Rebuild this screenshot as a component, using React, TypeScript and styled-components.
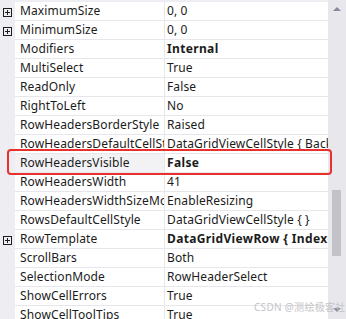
import React from "react";
import styled, { createGlobalStyle } from "styled-components";

const Global = createGlobalStyle`
  html, body { margin: 0; padding: 0; background: #ffffff; }
  body { font-family: "Noto Sans", "Noto Sans CJK SC", sans-serif; }
`;

const Frame = styled.div`
  position: relative;
  width: 346px;
  height: 319px;
  overflow: hidden;
  display: flex;
  background: #eeeef2;
`;

const Grid = styled.div`
  flex: 1;
  padding-top: 2px;
  display: flex;
  flex-direction: column;
`;

const Row = styled.div`
  position: relative;
  display: grid;
  grid-template-columns: 15px 150px 1fr;
  height: 19px;
  flex: none;
`;

const Gutter = styled.div`
  display: flex;
  align-items: center;
  justify-content: center;
  padding-top: 1px;
`;

const Cell = styled.div<{ $bold?: boolean; $selected?: boolean; $name?: boolean }>`
  background: ${(p) => (p.$selected ? "#f2f2f5" : "#ffffff")};
  border-bottom: 1px solid #e6e6ec;
  border-right: ${(p) => (p.$name ? "1px solid #e6e6ec" : "none")};
  padding-left: ${(p) => (p.$name ? "5px" : "2px")};
  font-size: 12px;
  letter-spacing: ${(p) => (p.$bold ? "0.35px" : "0.12px")};
  line-height: 18px;
  color: #1b1b1b;
  font-weight: ${(p) => (p.$bold ? 700 : 400)};
  white-space: nowrap;
  overflow: hidden;
`;

const Expander = styled.div`
  width: 9px;
  height: 9px;
  box-sizing: border-box;
  border: 1px solid #1e1e1e;
  position: relative;
  &::before {
    content: "";
    position: absolute;
    left: 1px;
    top: 3px;
    width: 5px;
    height: 1px;
    background: #1e1e1e;
  }
  &::after {
    content: "";
    position: absolute;
    left: 3px;
    top: 1px;
    width: 1px;
    height: 5px;
    background: #1e1e1e;
  }
`;

const Highlight = styled.div`
  position: absolute;
  z-index: 5;
  left: 7px;
  top: -5px;
  width: 325px;
  height: 26px;
  box-sizing: border-box;
  border: 2.5px solid #e8302c;
  border-radius: 4px;
  pointer-events: none;
`;

const ScrollBar = styled.div`
  width: 18px;
  flex: none;
  background: #e8e8ec;
  position: relative;
`;

const Arrow = styled.div<{ $down?: boolean }>`
  position: absolute;
  left: 5px;
  ${(p) => (p.$down ? "top: 308px;" : "top: 7px;")}
  width: 0;
  height: 0;
  border-left: 4px solid transparent;
  border-right: 4px solid transparent;
  ${(p) =>
    p.$down ? "border-top: 4px solid #868999;" : "border-bottom: 4px solid #868999;"}
`;

const Thumb = styled.div`
  position: absolute;
  left: 4px;
  top: 190px;
  width: 9px;
  height: 66px;
  background: #c2c3c9;
`;

const Watermark = styled.div`
  position: absolute;
  z-index: 6;
  left: 254px;
  top: 301px;
  font-size: 10px;
  line-height: 12px;
  color: #c4c4c8;
  font-family: "Noto Sans", "Noto Sans CJK SC", sans-serif;
  white-space: nowrap;
  letter-spacing: 0.3px;
`;

type Prop = { name: string; value: string; bold?: boolean; expand?: boolean; selected?: boolean };

const props: Prop[] = [
  { name: "MaximumSize", value: "0, 0", expand: true },
  { name: "MinimumSize", value: "0, 0", expand: true },
  { name: "Modifiers", value: "Internal", bold: true },
  { name: "MultiSelect", value: "True" },
  { name: "ReadOnly", value: "False" },
  { name: "RightToLeft", value: "No" },
  { name: "RowHeadersBorderStyle", value: "Raised" },
  { name: "RowHeadersDefaultCellStyle", value: "DataGridViewCellStyle { BackColor=Color" },
  { name: "RowHeadersVisible", value: "False", bold: true, selected: true },
  { name: "RowHeadersWidth", value: "41" },
  { name: "RowHeadersWidthSizeMode", value: "EnableResizing" },
  { name: "RowsDefaultCellStyle", value: "DataGridViewCellStyle { }" },
  { name: "RowTemplate", value: "DataGridViewRow { Index=-1 }", bold: true, expand: true },
  { name: "ScrollBars", value: "Both" },
  { name: "SelectionMode", value: "RowHeaderSelect" },
  { name: "ShowCellErrors", value: "True" },
  { name: "ShowCellToolTips", value: "True" },
];

export default function App() {
  return (
    <Frame>
      <Global />
      <Grid>
        {props.map((p) => (
          <Row key={p.name}>
            <Gutter>{p.expand && <Expander />}</Gutter>
            <Cell $name $selected={p.selected}>
              {p.name}
            </Cell>
            <Cell $bold={p.bold}>{p.value}</Cell>
            {p.selected && <Highlight />}
          </Row>
        ))}
      </Grid>
      <ScrollBar>
        <Arrow />
        <Thumb />
        <Arrow $down />
      </ScrollBar>
      <Watermark>CSDN @测绘极客社</Watermark>
    </Frame>
  );
}
